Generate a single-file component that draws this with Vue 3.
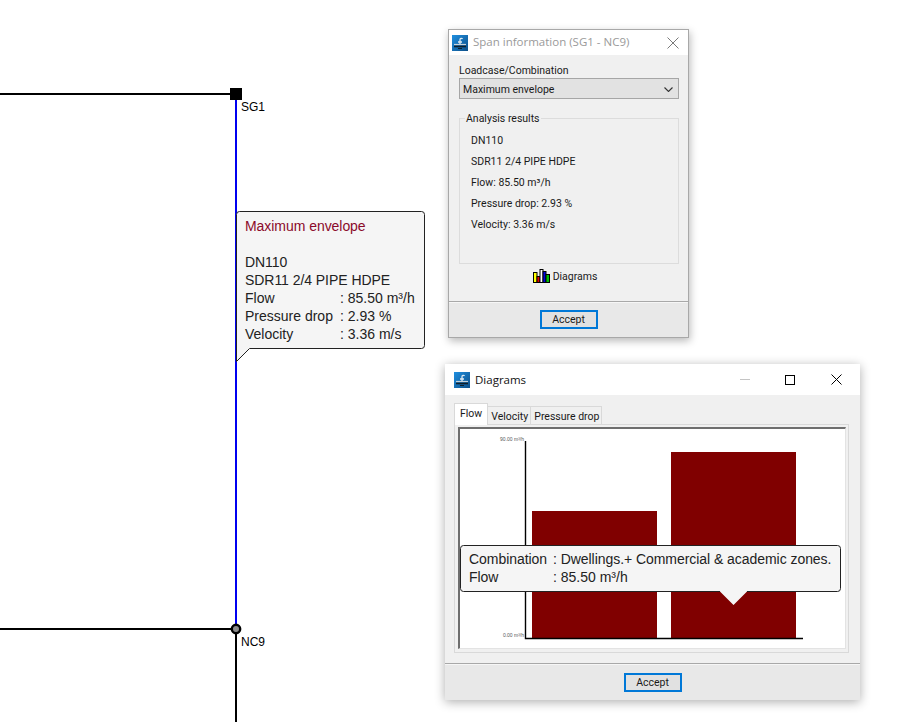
<script setup>
const spanResults = ['DN110', 'SDR11 2/4 PIPE HDPE', 'Flow: 85.50 m³/h', 'Pressure drop: 2.93 %', 'Velocity: 3.36 m/s']
const noteRows = [
  ['Flow', ': 85.50 m³/h'],
  ['Pressure drop', ': 2.93 %'],
  ['Velocity', ': 3.36 m/s'],
]
const tabs = ['Flow', 'Velocity', 'Pressure drop']
</script>

<template>
  <main class="desktop">
    <svg class="network" width="913" height="722" viewBox="0 0 913 722">
      <path d="M0 94H236M0 629H236M236 629V722" fill="none" stroke="#000" stroke-width="2" />
      <path d="M236 94V629" fill="none" stroke="#0000f0" stroke-width="2" />
      <rect x="230" y="88" width="12" height="12" fill="#000" />
      <circle cx="236" cy="629" r="4.2" fill="#8c8c8c" stroke="#000" stroke-width="2.4" />
      <text x="241" y="111" class="node">SG1</text>
      <text x="241" y="646" class="node">NC9</text>
    </svg>

    <aside class="note">
      <svg class="note-bg" width="190" height="153" viewBox="0 0 190 153">
        <path d="M.5 3.500a3 3 0 0 1 3-3H185.500a3 3 0 0 1 3 3V134.500a3 3 0 0 1-3 3H13.500L.5 150.500Z" fill="#f5f5f5" stroke="#222" />
      </svg>
      <div class="note-body">
        <div class="note-title">Maximum envelope</div>
        <div class="note-line note-first">DN110</div>
        <div class="note-line">SDR11 2/4 PIPE HDPE</div>
        <div v-for="row in noteRows" :key="row[0]" class="note-row">
          <span>{{ row[0] }}</span><span>{{ row[1] }}</span>
        </div>
      </div>
    </aside>

    <section class="window span-window">
      <header class="titlebar small-title">
        <svg class="app-icon" width="16" height="16" viewBox="0 0 16 16">
          <defs>
            <linearGradient id="appA" x1="0" y1="0" x2="1" y2="1">
              <stop offset="0" stop-color="#1f8fe0" /><stop offset="1" stop-color="#0d4f88" />
            </linearGradient>
          </defs>
          <rect width="16" height="16" fill="url(#appA)" />
          <path d="M2 9.500H14" stroke="#c9d3da" stroke-width="1.200" />
          <path d="M2 11.500H14" stroke="#10202c" stroke-width="1.600" />
          <path d="M6 13.500H10" stroke="#10202c" />
          <path d="M8 9V4.500C8 3 10 3 10.500 4M6 7H10" fill="none" stroke="#dfe9f0" stroke-width="1.300" />
        </svg>
        <span class="title dim">Span information (SG1 - NC9)</span>
        <svg class="close dim-close" width="12" height="12" viewBox="0 0 12 12">
          <path d="M.5.5 11.500 11.500M11.500.5.5 11.500" stroke="#7a7a7a" fill="none" />
        </svg>
      </header>
      <div class="span-content">
        <label class="field-label">Loadcase/Combination</label>
        <div class="select">
          <span>Maximum envelope</span>
          <svg width="9" height="5" viewBox="0 0 9 5"><path d="M.5.500 4.500 4.500 8.500.5" fill="none" stroke="#333" stroke-width="1.100" /></svg>
        </div>
        <fieldset class="results">
          <legend>Analysis results</legend>
          <div v-for="line in spanResults" :key="line" class="result">{{ line }}</div>
        </fieldset>
        <div class="diagrams-link">
          <svg width="17" height="14" viewBox="0 0 17 14">
            <g stroke="#000">
              <rect x=".5" y="3.500" width="3.500" height="10" fill="#ffff00" />
              <rect x="4" y="7.500" width="3" height="6" fill="#e00000" />
              <rect x="7" y=".5" width="3" height="13" fill="#fff" />
              <rect x="10" y="2.500" width="3" height="11" fill="#0000e0" />
              <rect x="13" y="5.500" width="3.500" height="8" fill="#00c000" />
            </g>
          </svg>
          <span>Diagrams</span>
        </div>
      </div>
      <footer class="footer span-footer"><button class="accept">Accept</button></footer>
    </section>

    <section class="window diagrams-window">
      <header class="titlebar big-title">
        <svg class="app-icon" width="16" height="16" viewBox="0 0 16 16">
          <defs>
            <linearGradient id="appB" x1="0" y1="0" x2="1" y2="1">
              <stop offset="0" stop-color="#1f8fe0" /><stop offset="1" stop-color="#0d4f88" />
            </linearGradient>
          </defs>
          <rect width="16" height="16" fill="url(#appB)" />
          <path d="M2 9.500H14" stroke="#c9d3da" stroke-width="1.200" />
          <path d="M2 11.500H14" stroke="#10202c" stroke-width="1.600" />
          <path d="M6 13.500H10" stroke="#10202c" />
          <path d="M8 9V4.500C8 3 10 3 10.500 4M6 7H10" fill="none" stroke="#dfe9f0" stroke-width="1.300" />
        </svg>
        <span class="title">Diagrams</span>
        <div class="controls">
          <svg width="10" height="1" viewBox="0 0 10 1"><path d="M0 .5H10" stroke="#c4c4c4" /></svg>
          <svg width="10" height="10" viewBox="0 0 10 10"><rect x=".5" y=".5" width="9" height="9" fill="none" stroke="#000" /></svg>
          <svg width="11" height="11" viewBox="0 0 11 11"><path d="M.5.5 10.500 10.500M10.500.5.5 10.500" stroke="#000" fill="none" /></svg>
        </div>
      </header>
      <div class="diagram-content">
        <nav class="tabs">
          <span v-for="(tab, i) in tabs" :key="tab" class="tab" :class="{ active: i === 0 }">{{ tab }}</span>
        </nav>
        <div class="tab-panel">
          <div class="chart">
            <svg class="chart-svg" width="384" height="218" viewBox="0 0 384 218">
              <rect x="72" y="82" width="125" height="127" fill="#800000" />
              <rect x="211" y="23" width="125" height="186" fill="#800000" />
              <path d="M65.500 12V209.500H343" fill="none" stroke="#000" stroke-width="1.400" />
              <text x="64" y="12" text-anchor="end" class="tiny">90.00 m³/h</text>
              <text x="64" y="208" text-anchor="end" class="tiny">0.00 m³/h</text>
            </svg>
            <div class="chart-tip">
              <svg class="tip-bg" width="382" height="62" viewBox="0 0 382 62">
                <path d="M.5 3.500a3 3 0 0 1 3-3H377.500a3 3 0 0 1 3 3V43.500a3 3 0 0 1-3 3H287L273.500 60 260 46.500H3.500a3 3 0 0 1-3-3Z" fill="#f5f5f5" />
                <path d="M260 46.500H3.500a3 3 0 0 1-3-3V3.500a3 3 0 0 1 3-3H377.500a3 3 0 0 1 3 3V43.500a3 3 0 0 1-3 3H287" fill="none" stroke="#222" />
              </svg>
              <div class="tip-grid">
                <span>Combination</span><span>: Dwellings.+ Commercial &amp; academic zones.</span>
                <span>Flow</span><span class="tip-value">: 85.50 m³/h</span>
              </div>
            </div>
          </div>
        </div>
      </div>
      <footer class="footer diagram-footer"><button class="accept">Accept</button></footer>
    </section>
  </main>
</template>

<style scoped>
.desktop {
  position: relative;
  width: 913px;
  height: 722px;
  overflow: hidden;
  background: #fff;
  font-family: Roboto, "Open Sans", sans-serif;
}
.network { position: absolute; left: 0; top: 0; }
.node { font: 12px "Liberation Sans", sans-serif; fill: #000; }

.note { position: absolute; left: 236px; top: 211px; width: 190px; height: 153px; }
.note-bg { position: absolute; left: 0; top: 0; }
.note-body {
  position: relative;
  padding: 6px 0 0 9px;
  font: 14px/18px "Liberation Sans", sans-serif;
  letter-spacing: -.05px;
  color: #222;
}
.note-title { color: #8b0a2a; height: 18px; }
.note-first { margin-top: 18px; }
.note-row {
  display: grid;
  grid-template-columns: 95px auto;
  justify-content: start;
  letter-spacing: 0;
}

.window {
  position: absolute;
  display: flex;
  flex-direction: column;
  box-sizing: border-box;
  background: #f0f0f0;
  font-size: 10.500px;
  color: #1a1a1a;
}
.span-window {
  left: 448px; top: 29px; width: 241px; height: 309px;
  border: 1px solid #a8a8a8;
  box-shadow: 1px 3px 8px rgba(0, 0, 0, .28);
}
.diagrams-window {
  left: 445px; top: 364px; width: 415px; height: 336px;
  box-shadow: 0 2px 10px rgba(0, 0, 0, .32);
}
.titlebar { display: flex; align-items: center; background: #fff; flex: none; }
.small-title { height: 25px; padding: 0 9px 0 3px; }
.big-title { height: 31px; padding: 0 0 0 9px; }
.app-icon { flex: none; }
.title {
  margin-left: 5px;
  flex: 1;
  font-family: "Open Sans", sans-serif;
  font-size: 11.500px;
  color: #111;
}
.small-title .title { position: relative; top: -1px; color: #9a9a9a; }
.controls { display: flex; align-items: center; }
.controls svg:nth-child(1) { margin-right: 35px; }
.controls svg:nth-child(2) { margin-right: 36px; }
.controls svg:nth-child(3) { margin-right: 18px; }

.span-content { flex: 1; display: flex; flex-direction: column; padding: 9px 9px 0 10px; }
.field-label { line-height: 14px; }
.select {
  height: 21px;
  box-sizing: border-box;
  padding: 1px 5px 0 3px;
  display: flex;
  align-items: center;
  justify-content: space-between;
  background: #e2e2e2;
  border: 1px solid #a6a6a6;
}
.results {
  margin: 11px 0 0;
  padding: 4px 0 0 11px;
  height: 154px;
  box-sizing: border-box;
  border: 1px solid #dcdcdc;
  min-width: 0;
}
.results legend { padding: 1px 1px 0; margin-left: -6px; line-height: 15px; }
.result { height: 21px; line-height: 21px; }
.diagrams-link {
  display: flex;
  align-items: center;
  justify-content: center;
  gap: 3px;
  margin-top: 4px;
  padding-right: 8px;
  height: 16px;
}
.footer {
  flex: none;
  display: flex;
  align-items: center;
  justify-content: center;
  background: #e8e8e8;
  border-top: 1px solid #a8a8a8;
  box-shadow: inset 0 1px 0 #f6f6f6;
}
.span-footer { height: 35px; }
.diagram-footer { height: 36px; }
.accept {
  width: 58px;
  height: 19px;
  box-sizing: border-box;
  padding: 0;
  border: 2px solid #0078d7;
  background: #e1e1e1;
  font: inherit;
  color: #1a1a1a;
}
.diagram-content {
  flex: 1;
  padding: 8px 11px 10px 9px;
  display: flex;
  flex-direction: column;
  min-height: 0;
}
.tabs { display: flex; height: 21px; align-items: flex-end; flex: none; }
.tab {
  box-sizing: border-box;
  height: 18px;
  line-height: 19px;
  padding: 0 2px 0 3px;
  background: #f0f0f0;
  border: 1px solid #d9d9d9;
  border-bottom: 0;
  margin-left: -1px;
}
.tab.active {
  position: relative;
  z-index: 1;
  height: 22px;
  margin-bottom: -1px;
  margin-left: 0;
  line-height: 20px;
  padding: 0 5px;
  background: #fff;
}
.tab-panel {
  flex: 1;
  box-sizing: border-box;
  border: 1px solid #d9d9d9;
  padding: 2px 2px 3px 3px;
  min-height: 0;
}
.chart {
  position: relative;
  height: 100%;
  box-sizing: border-box;
  background: #fff;
  border-top: 2px solid #6e6e6e;
  border-left: 2px solid #6e6e6e;
  border-right: 1px solid #e3e3e3;
  border-bottom: 1px solid #e3e3e3;
}
.chart-svg { position: absolute; left: 0; top: 0; }
.tiny { font: 5px "Liberation Sans", sans-serif; fill: #555; }
.chart-tip { position: absolute; left: 0; top: 116px; width: 382px; height: 62px; }
.tip-bg { position: absolute; left: 0; top: 0; }
.tip-grid {
  position: relative;
  display: grid;
  grid-template-columns: 84px auto;
  justify-content: start;
  padding: 5px 0 0 9px;
  font: 14px/18px "Liberation Sans", sans-serif;
  letter-spacing: -.05px;
  color: #222;
}
.tip-value { letter-spacing: 0; }
</style>
